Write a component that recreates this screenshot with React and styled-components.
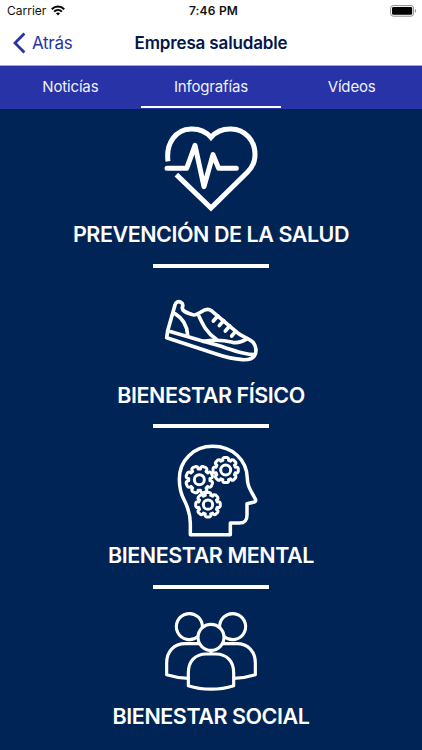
import React, { Fragment } from "react";
import styled, { createGlobalStyle, ThemeProvider } from "styled-components";

const theme = {
  navy: "#002456",
  title: "#04164a",
  blue: "#2833a8",
  white: "#ffffff"
};

const GlobalStyle = createGlobalStyle`
  * {
    box-sizing: border-box;
  }

  body {
    margin: 0;
    background: ${theme.navy};
    font-family: Inter, "Liberation Sans", sans-serif;
  }
`;

const Screen = styled.div`
  display: flex;
  flex-direction: column;
  height: 750px;
  overflow: hidden;
  background: ${props => props.theme.navy};
`;

const Top = styled.header`
  flex: none;
  height: 66px;
  background: ${props => props.theme.white};
  border-bottom: 1px solid #a3a6c4;
`;

const StatusBar = styled.div`
  display: grid;
  grid-template-columns: 1fr auto 1fr;
  align-items: center;
  height: 21px;
  padding: 0 5px 0 7px;
  font-size: 12px;
  color: #111;

  svg {
    display: block;
  }
`;

const Carrier = styled.div`
  display: flex;
  align-items: center;
  gap: 5px;
`;

const Clock = styled.div`
  padding-left: 3px;
  font-weight: 600;
  letter-spacing: 0.2px;
`;

const Battery = styled.div`
  justify-self: end;
`;

const NavBar = styled.nav`
  display: grid;
  grid-template-columns: 1fr auto 1fr;
  align-items: center;
  height: 43px;
  padding: 0 13px;
`;

const Back = styled.a`
  display: flex;
  align-items: center;
  gap: 6px;
  font-size: 17px;
  letter-spacing: -0.3px;
  color: ${props => props.theme.blue};
`;

const Heading = styled.h1`
  margin: 0;
  font-size: 17px;
  font-weight: 600;
  letter-spacing: -0.15px;
  color: ${props => props.theme.title};
`;

const Tabs = styled.div`
  display: grid;
  grid-template-columns: repeat(3, 1fr);
  flex: none;
  height: 43px;
  background: ${props => props.theme.blue};
`;

const Tab = styled.button`
  padding: 1px 0 0;
  font: inherit;
  font-size: 15px;
  letter-spacing: -0.15px;
  color: #f0f1fb;
  background: none;
  border: 0;
  border-bottom: 2px solid
    ${props => (props.$active ? props.theme.white : "transparent")};
  margin-bottom: 1px;
`;

const List = styled.main`
  display: flex;
  flex-direction: column;
`;

const Section = styled.section`
  display: flex;
  flex-direction: column;
  flex: none;
  align-items: center;
  height: 160.7px;
  padding-top: 13px;
`;

const Icon = styled.svg`
  display: block;
  flex: none;
  width: 94px;
  height: 94px;
  fill: none;
  stroke: ${props => props.theme.white};
  stroke-width: ${props => props.$weight}px;
  stroke-linejoin: round;
`;

const Label = styled.h2`
  margin: 5px 0 0;
  font-size: 21.5px;
  font-weight: 600;
  line-height: 27px;
  letter-spacing: -0.45px;
  white-space: nowrap;
  color: ${props => props.theme.white};
`;

const Divider = styled.div`
  width: 116px;
  height: 4px;
  margin-top: 15.5px;
  background: ${props => props.theme.white};
`;

const HeartIcon = () => (
  <Icon viewBox="27 6 282 282" $weight={15}>
    <path
      strokeLinejoin="miter"
      d="M39 124C32 70 62 28 108 27C134 26 154 36 168 52C182 36 202 26 228 27C270 28 300 60 300 104C300 128 290 144 277 157L168 264L64 164"
    />
    <path strokeLinecap="round" d="M36 145H95L120 76L147 200L174 104L191 145H244" />
  </Icon>
);

const ShoeIcon = () => (
  <Icon viewBox="27 -22 282 282" $weight={11} strokeLinecap="round">
    <path d="M38 121L43 104L60 44C62 34 70 32 78 36C86 40 84 46 82 52C80 64 100 68 112 73C122 77 129 71 138 65C148 58 160 54 169 61L247 127C262 140 284 145 294 156C303 166 306 184 299 195C292 207 278 209 262 208C234 206 207 199 186 192L35 142L38 121L145 153L188 165C214 173 236 181 260 187C276 191 292 193 300 193" />
    <path d="M60 70C80 82 96 103 98 134" />
    <path d="M132 78C143 102 154 126 184 147" />
    <path d="M145 153C174 148 205 149 233 156C253 160 267 151 277 145" />
    <path d="M188 77L175 92M206 91L193 106M224 107L211 122M242 123L230 137" />
  </Icon>
);

// Closed outline of a gear: flat teeth with rounded shoulders
const gearPath = (cx, cy, outer, inner, teeth, turn = 0) => {
  const step = (Math.PI * 2) / teeth;
  const point = (radius, angle) =>
    `${(cx + radius * Math.cos(angle)).toFixed(1)} ${(
      cy +
      radius * Math.sin(angle)
    ).toFixed(1)}`;

  const outline = Array.from({ length: teeth }, (_, i) => {
    const a = i * step + turn;
    return `${point(inner, a - step * 0.36)}Q${point(
      outer,
      a - step * 0.36
    )} ${point(outer, a - step * 0.14)}L${point(
      outer,
      a + step * 0.14
    )}Q${point(outer, a + step * 0.36)} ${point(inner, a + step * 0.36)}`;
  });

  return `M${outline.join("L")}Z`;
};

const MindIcon = () => (
  <Icon viewBox="-18 16 282 282" $weight={10.5}>
    <path d="M61 291V257C61 232 54 210 43 188C32 168 28 148 28 124C28 68 71 26 128 26C188 26 231 67 232 122C232 140 237 151 245 164L256 184C259 190 256 193 250 194L231 198V232C231 249 224 256 208 256H181V291Z" />
    <g strokeWidth="9">
      <path d={gearPath(88, 126, 41, 32, 8, Math.PI / 8)} />
      <circle cx="88" cy="126" r="15" />
      <path d={gearPath(167, 97, 38, 30, 8)} />
      <circle cx="167" cy="97" r="15" />
      <path d={gearPath(114, 201, 37, 29, 8)} />
      <circle cx="114" cy="201" r="14" />
    </g>
  </Icon>
);

const PeopleIcon = () => (
  <Icon viewBox="27 -3 282 282" $weight={9.5}>
    <circle cx="168" cy="97" r="39" />
    <path d="M142 68A39 39 0 1 0 129 94" />
    <path d="M194 68A39 39 0 1 1 207 94" />
    <path d="M134 116H91C56 116 35 140 35 174V209C54 215 76 219 100 220" />
    <path d="M202 116H245C280 116 301 140 301 174V209C282 215 260 219 236 220" />
    <path d="M100 242V203C100 169 120 147 154 147H182C216 147 236 169 236 203V242C194 256 142 256 100 242Z" />
    <path d="M168 136V147" />
  </Icon>
);

const tabs = ["Noticías", "Infografías", "Vídeos"];

const sections = [
  { title: "PREVENCIÓN DE LA SALUD", icon: HeartIcon },
  { title: "BIENESTAR FÍSICO", icon: ShoeIcon },
  { title: "BIENESTAR MENTAL", icon: MindIcon },
  { title: "BIENESTAR SOCIAL", icon: PeopleIcon }
];

const App = () => {
  const renderSection = ({ title, icon: Drawing }, index) => (
    <Section key={title}>
      <Drawing />
      <Label>{title}</Label>
      {index < sections.length - 1 && <Divider />}
    </Section>
  );

  return (
    <ThemeProvider theme={theme}>
      <Fragment>
        <GlobalStyle />
        <Screen>
          <Top>
            <StatusBar>
              <Carrier>
                <span>Carrier</span>
                <svg width="14" height="11" viewBox="0 0 14 11" fill="none">
                  <g stroke="#000" strokeWidth="2">
                    <path d="M.8 4.2C4.3.7 9.7.7 13.2 4.2" />
                    <path d="M3.1 6.6C5.3 4.5 8.7 4.5 10.9 6.6" />
                  </g>
                  <path d="M4.9 8.3C6.1 7.2 7.9 7.2 9.1 8.3L7 10.4Z" fill="#000" />
                </svg>
              </Carrier>
              <Clock>7:46 PM</Clock>
              <Battery>
                <svg width="27" height="12" viewBox="0 0 27 12">
                  <rect x=".6" y=".6" width="23" height="10.6" rx="2.6" fill="none" stroke="#8c8c8c" />
                  <rect x="2" y="2" width="20.2" height="7.8" rx="1.4" />
                  <path d="M25 4C26.6 4.6 26.6 7.2 25 7.8Z" fill="#8c8c8c" />
                </svg>
              </Battery>
            </StatusBar>
            <NavBar>
              <Back>
                <svg width="13" height="22" viewBox="0 0 13 22" fill="none">
                  <path d="M11.4 1.4L2 11L11.4 20.6" stroke={theme.blue} strokeWidth="2.8" />
                </svg>
                Atrás
              </Back>
              <Heading>Empresa saludable</Heading>
            </NavBar>
          </Top>
          <Tabs>
            {tabs.map(tab => (
              <Tab key={tab} type="button" $active={tab === "Infografías"}>
                {tab}
              </Tab>
            ))}
          </Tabs>
          <List>{sections.map(renderSection)}</List>
        </Screen>
      </Fragment>
    </ThemeProvider>
  );
};

export default App;
